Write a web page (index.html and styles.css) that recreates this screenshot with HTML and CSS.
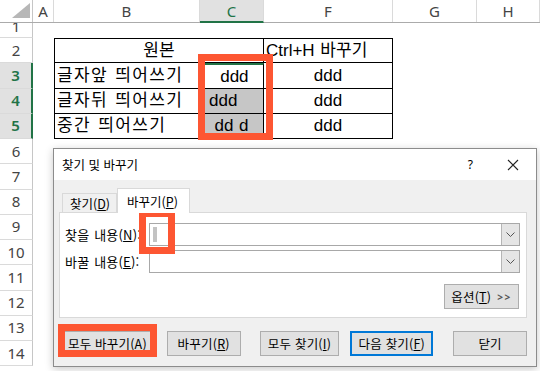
FILE: index.html
```html
<!DOCTYPE html>
<html lang="ko">
<head>
<meta charset="utf-8">
<link rel="stylesheet" href="styles.css">
</head>
<body>
<div class="sheet">
  <div class="row hdr">
    <div class="rh corner"><svg width="33" height="22" viewBox="0 0 33 22"><polygon points="30,3 30,18 12,18" fill="#b7b7b7"/></svg></div>
    <div class="ch ca">A</div>
    <div class="ch cb">B</div>
    <div class="ch cc on">C</div>
    <div class="ch cf">F</div>
    <div class="ch cg">G</div>
    <div class="ch chh">H</div>
  </div>
  <div class="row r1"><div class="rh"><span>1</span></div></div>
  <div class="row"><div class="rh">2</div><div class="c ca"></div><div class="c cbc t tt tl tr">원본</div><div class="c cf t tt tr left">Ctrl+H 바꾸기</div></div>
  <div class="row"><div class="rh on">3</div><div class="c ca"></div><div class="c cb t tl left kr">글자앞 띄어쓰기</div><div class="c cc t tr act">&nbsp;ddd</div><div class="c cf t tr">ddd</div></div>
  <div class="row"><div class="rh on">4</div><div class="c ca"></div><div class="c cb t tl left kr">글자뒤 띄어쓰기</div><div class="c cc t tr selg left4">ddd</div><div class="c cf t tr">ddd</div></div>
  <div class="row"><div class="rh on">5</div><div class="c ca"></div><div class="c cb t tl left kr">중간 띄어쓰기</div><div class="c cc t tr selg">dd d</div><div class="c cf t tr">ddd</div></div>
  <div class="row"><div class="rh">6</div></div>
  <div class="row"><div class="rh">7</div></div>
  <div class="row"><div class="rh">8</div></div>
  <div class="row"><div class="rh">9</div></div>
  <div class="row"><div class="rh">10</div></div>
  <div class="row"><div class="rh">11</div></div>
  <div class="row"><div class="rh">12</div></div>
  <div class="row"><div class="rh">13</div></div>
  <div class="row"><div class="rh">14</div></div>
</div>

<div class="dlg">
  <div class="dtitle">
    <span class="dt">찾기 및 바꾸기</span>
    <span class="help">?</span>
    <svg class="close" width="12" height="12" viewBox="0 0 12 12"><path d="M1 1 L11 11 M11 1 L1 11" stroke="#222" stroke-width="1.1" fill="none"/></svg>
  </div>
  <div class="dbody">
    <div class="tabs">
      <div class="tab">찾기(<u>D</u>)</div>
      <div class="tab act">바꾸기(<u>P</u>)</div>
    </div>
    <div class="panel">
      <div class="field">
        <span class="lbl">찾을 내용(<u>N</u>):</span>
        <div class="combo"><span class="caret"></span><div class="dd"><svg width="9" height="5" viewBox="0 0 9 5"><path d="M0.5 0.5 L4.5 4.5 L8.5 0.5" stroke="#555" fill="none"/></svg></div></div>
      </div>
      <div class="field">
        <span class="lbl">바꿀 내용(<u>E</u>):</span>
        <div class="combo"><div class="dd"><svg width="9" height="5" viewBox="0 0 9 5"><path d="M0.5 0.5 L4.5 4.5 L8.5 0.5" stroke="#555" fill="none"/></svg></div></div>
      </div>
      <div class="optrow"><div class="btn opt">옵션(<u>T</u>)<span class="gt">&gt;&gt;</span></div></div>
    </div>
    <div class="btns">
      <div class="btn b1">모두 바꾸기(<u>A</u>)</div>
      <div class="btn b2">바꾸기(<u>R</u>)</div>
      <div class="btn b3">모두 찾기(<u>I</u>)</div>
      <div class="btn b4 def">다음 찾기(<u>F</u>)</div>
      <div class="btn b5">닫기</div>
    </div>
  </div>
</div>

<div class="redbox rb1"></div>
<div class="redbox rb2"></div>
<div class="redbox rb3"></div>
</body>
</html>
```
FILE: styles.css
```css
* { box-sizing: border-box; }
html, body { margin: 0; padding: 0; }
body {
  width: 540px;
  height: 371px;
  overflow: hidden;
  background: #fff;
  position: relative;
  font-family: "Noto Sans CJK KR", "Noto Sans", sans-serif;
  color: #000;
}

/* ---------- sheet ---------- */
.sheet { display: flex; flex-direction: column; }
.row { display: flex; height: 25.25px; flex: none; }
.row.hdr { height: 23px; border-bottom: 1px solid #ababab; }
.row.r1 { height: 15px; overflow: hidden; }

.rh {
  width: 33px; flex: none;
  border-right: 1px solid #c6c6c6;
  border-bottom: 1px solid #dadada;
  display: flex; align-items: center; justify-content: center;
  font-family: "Noto Sans", sans-serif;
  font-size: 15px; color: #444;
  line-height: 1;
}
.rh.on { color: #217346; background: #e1e1e1; border-right: 2px solid #217346; font-weight: 600; }
.r1 .rh { align-items: flex-start; overflow: hidden; }
.r1 .rh span { display: block; line-height: 15px; margin-top: -4px; }
.hdr .rh.corner { border-bottom: none; display: block; }

.ch {
  flex: none;
  display: flex; align-items: center; justify-content: center;
  font-family: "Noto Sans", sans-serif;
  font-size: 15px; color: #444;
  border-right: 1px solid #dadada;
}
.ch.on { background: #e1e1e1; color: #217346; border-bottom: 2px solid #217346; margin-bottom: -1px; }

.ca { width: 21px; flex: none; }
.cb { width: 146px; flex: none; }
.cc { width: 64px; flex: none; }
.cbc { width: 210px; flex: none; }
.cf { width: 129px; flex: none; }
.cg { width: 84px; flex: none; }
.chh { width: 63px; flex: none; }

.c {
  display: flex; align-items: center; justify-content: center;
  font-family: "Liberation Sans", "Noto Sans CJK KR", sans-serif;
  font-size: 17px; line-height: 1; white-space: nowrap;
  color: #000;
  word-spacing: 1px;
}
.c.left { justify-content: flex-start; padding-left: 2px; }
.c.kr { letter-spacing: 1.4px; }
.t { border-bottom: 1px solid #000; }
.tt { border-top: 1px solid #000; }
.tl { border-left: 1px solid #000; }
.tr { border-right: 1px solid #000; }
.act { border-top: 2px solid #217346; }
.selg { background: #c6c6c6; }
.left4 { justify-content: flex-start; padding-left: 9px; }

/* ---------- dialog ---------- */
.dlg {
  position: absolute;
  left: 53px; top: 148px;
  width: 484px; height: 219px;
  border: 1px solid #8c8c8c;
  background: #f0f0f0;
  box-shadow: 0 2px 8px rgba(0,0,0,0.22);
  font-size: 12px;
  display: flex; flex-direction: column;
}
.dtitle {
  height: 31px; flex: none;
  background: #fff;
  display: flex; align-items: center;
  padding-left: 8px;
}
.dt { flex: 1; font-size: 12.5px; }
.help { font-family: "Noto Sans", sans-serif; font-size: 12px; margin-right: 34px; }
.close { margin-right: 17px; }

.dbody { padding: 8px 9px 0 5px; display: flex; flex-direction: column; }
.tabs { display: flex; align-items: flex-end; margin-left: 3px; height: 24px; }
.tab {
  height: 19px; width: 55px;
  border: 1px solid #d9d9d9; border-bottom: none;
  padding-left: 7px;
  display: flex; align-items: center;
  font-size: 12.5px;
}
.tab.act {
  height: 25px; width: 73px;
  background: #fff;
  padding-left: 9px;
  margin-bottom: -1px;
  position: relative; z-index: 1;
  border-color: #d9d9d9;
}
.panel {
  height: 106px;
  background: #fff;
  border: 1px solid #d9d9d9;
  padding: 10px 6px 0 5px;
  display: flex; flex-direction: column; gap: 4px;
}
.field { display: flex; align-items: center; height: 23px; }
.lbl { width: 84px; flex: none; font-size: 13px; white-space: nowrap; letter-spacing: 0.2px; word-spacing: 1px; }
.combo {
  flex: 1; height: 23px;
  border: 1px solid #a8a8a8;
  background: #fff;
  display: flex; align-items: center; justify-content: space-between;
}
.caret { width: 4px; height: 15px; background: #c3c3c3; margin-left: 3px; }
.dd {
  width: 18px; height: 21px; margin-left: auto;
  background: #e5e5e5; border-left: 1px solid #b5b5b5;
  display: flex; align-items: center; justify-content: center;
}
.optrow { display: flex; justify-content: flex-end; margin-top: 7px; padding-right: 1px; }

.btn {
  height: 25px;
  background: #e1e1e1;
  border: 1px solid #adadad;
  display: flex; align-items: center; justify-content: center;
  font-size: 12.5px; white-space: nowrap;
  letter-spacing: 0.2px;
}
.opt { width: 75px; }
.gt { font-family: "Noto Sans", sans-serif; font-size: 10px; color: #555; margin-left: 6px; letter-spacing: 1.5px; font-weight: 700; }
.btns { display: flex; margin-top: 13px; }
.b1 { width: 91px; margin-left: 3px; }
.b2 { width: 74px; margin-left: 14px; }
.b3 { width: 80px; margin-left: 19px; }
.b4 { width: 83px; margin-left: 11px; }
.b5 { width: 74px; margin-left: 20px; }
.btn.def { border: 2px solid #0078d7; }

/* ---------- red highlight boxes ---------- */
.redbox { position: absolute; border: 7px solid #fd5632; }
.rb1 { left: 198px; top: 54px; width: 75px; height: 86px; }
.rb2 { left: 139px; top: 210px; width: 36px; height: 44px; }
.rb3 { left: 58px; top: 324px; width: 99px; height: 33px; }
```
